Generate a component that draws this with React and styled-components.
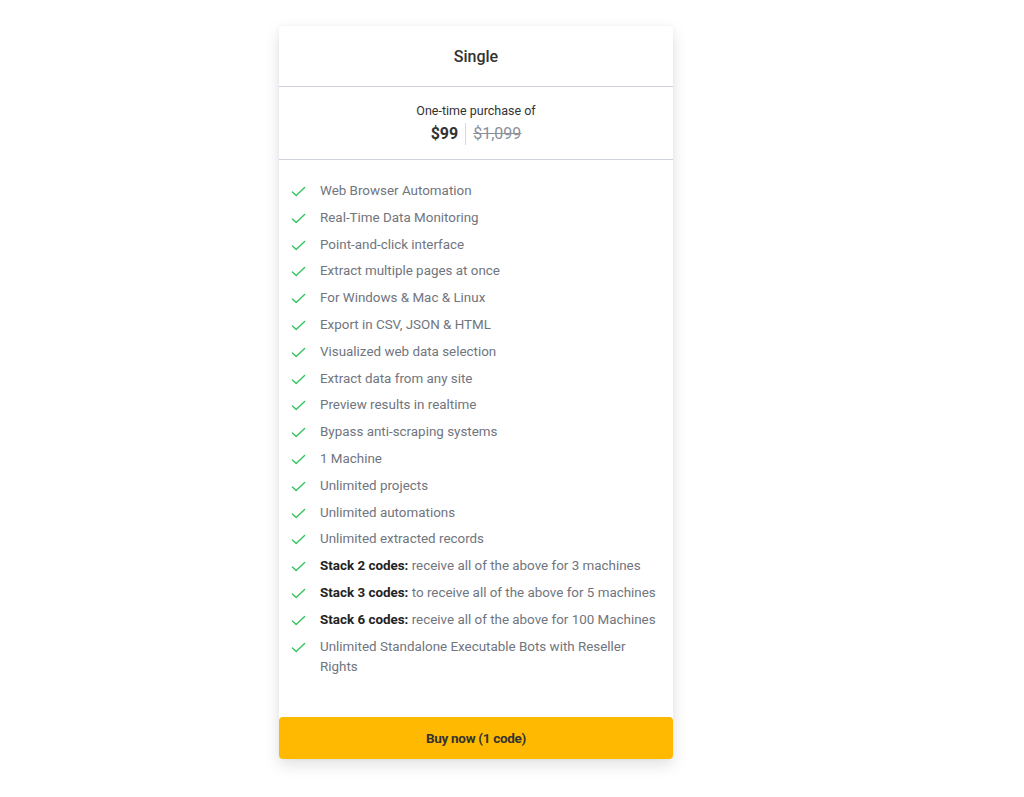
import React from "react";
import styled, { createGlobalStyle } from "styled-components";

const GlobalStyle = createGlobalStyle`
  body {
    margin: 0;
    background: #ffffff;
    font-family: Roboto, "Liberation Sans", Arial, sans-serif;
  }
`;

const features = [
  { text: "Web Browser Automation" },
  { text: "Real-Time Data Monitoring" },
  { text: "Point-and-click interface" },
  { text: "Extract multiple pages at once" },
  { text: "For Windows & Mac & Linux" },
  { text: "Export in CSV, JSON & HTML" },
  { text: "Visualized web data selection" },
  { text: "Extract data from any site" },
  { text: "Preview results in realtime" },
  { text: "Bypass anti-scraping systems" },
  { text: "1 Machine" },
  { text: "Unlimited projects" },
  { text: "Unlimited automations" },
  { text: "Unlimited extracted records" },
  { bold: "Stack 2 codes:", text: " receive all of the above for 3 machines" },
  { bold: "Stack 3 codes:", text: " to receive all of the above for 5 machines" },
  { bold: "Stack 6 codes:", text: " receive all of the above for 100 Machines" },
  { text: "Unlimited Standalone Executable Bots with Reseller Rights" },
];

function Check() {
  return (
    <CheckIcon viewBox="0 0 16 16" fill="none">
      <path
        d="M1.5 8.5 L5.5 12.3 L14.5 3.8"
        stroke="#2fc25b"
        strokeWidth="1.4"
        strokeLinecap="round"
        strokeLinejoin="round"
      />
    </CheckIcon>
  );
}

export default function App() {
  return (
    <Page>
      <GlobalStyle />
      <Card>
        <Header>Single</Header>
        <PriceBox>
          <Caption>One-time purchase of</Caption>
          <Prices>
            <Price>$99</Price>
            <OldPrice>$1,099</OldPrice>
          </Prices>
        </PriceBox>
        <List>
          {features.map((f, i) => (
            <Item key={i}>
              <Check />
              <span>
                {f.bold && <b>{f.bold}</b>}
                {f.text}
              </span>
            </Item>
          ))}
        </List>
        <BuyButton>Buy now (1 code)</BuyButton>
      </Card>
    </Page>
  );
}

const Page = styled.div`
  padding: 26px 0 30px 279px;
`;

const Card = styled.div`
  width: 394px;
  background: #ffffff;
  border-radius: 4px;
  box-shadow: 0 6px 16px rgba(0, 0, 0, 0.12), 0 0 4px rgba(0, 0, 0, 0.04);
  display: flex;
  flex-direction: column;
`;

const Header = styled.div`
  height: 60px;
  display: flex;
  align-items: center;
  justify-content: center;
  font-size: 16px;
  font-weight: 500;
  color: #333333;
  border-bottom: 1px solid #cfd3e0;
`;

const PriceBox = styled.div`
  height: 73px;
  padding-top: 2px;
  box-sizing: border-box;
  display: flex;
  flex-direction: column;
  align-items: center;
  justify-content: center;
  gap: 4px;
  border-bottom: 1px solid #cfd3e0;
`;

const Caption = styled.div`
  font-size: 12.5px;
  color: #333333;
  line-height: 16px;
`;

const Prices = styled.div`
  display: flex;
  align-items: center;
  font-size: 16px;
  line-height: 22px;
`;

const Price = styled.span`
  font-weight: 700;
  color: #333333;
  padding-right: 7px;
  border-right: 1px solid #d5d8e0;
`;

const OldPrice = styled.span`
  color: #8a8f99;
  text-decoration: line-through;
  padding-left: 7px;
`;

const List = styled.ul`
  list-style: none;
  margin: 0;
  padding: 21px 8px 40px 12px;
  display: flex;
  flex-direction: column;
  gap: 6.8px;
`;

const Item = styled.li`
  display: flex;
  align-items: flex-start;
  gap: 14px;
  font-size: 13.4px;
  line-height: 20px;
  color: #70757e;
  b {
    font-weight: 700;
    color: #222222;
  }
`;

const CheckIcon = styled.svg`
  width: 15px;
  height: 15px;
  flex-shrink: 0;
  margin-top: 3px;
`;

const BuyButton = styled.button`
  height: 42px;
  border: none;
  border-radius: 4px;
  background: #ffb900;
  color: #333333;
  font-family: Roboto, "Liberation Sans", Arial, sans-serif;
  font-size: 13.5px;
  font-weight: 700;
  cursor: pointer;
  letter-spacing: -0.3px;
`;
